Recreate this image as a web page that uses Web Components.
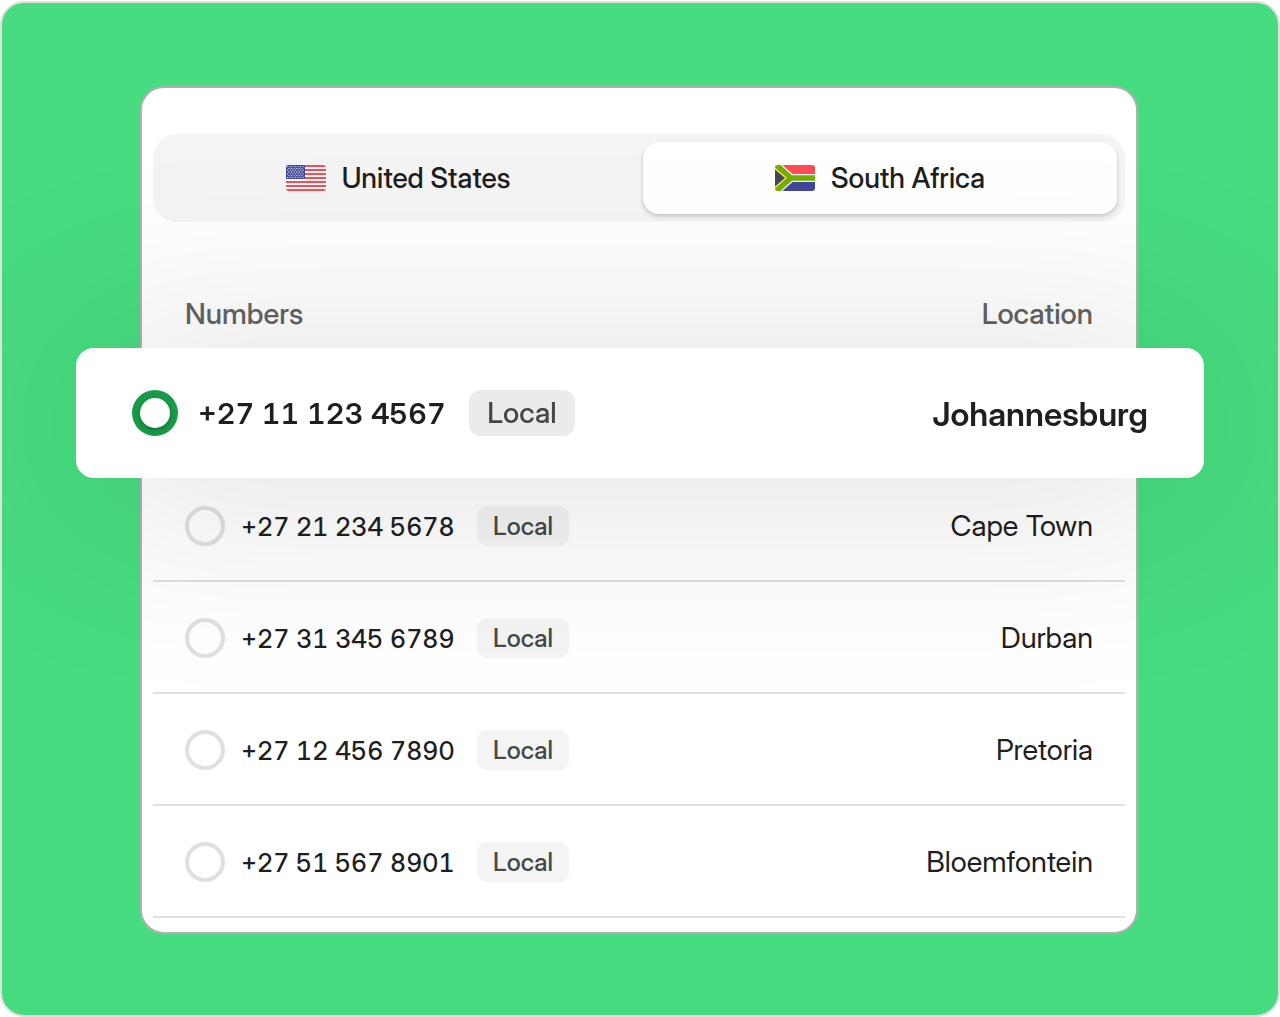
<!DOCTYPE html>
<html lang="en">
<head>
<meta charset="utf-8">
<meta name="viewport" content="width=device-width, initial-scale=1">
<title>Choose a number</title>
<style>
  body {
    margin: 0;
    background: #fff;
    color: #1f1f1f;
    font-family: "Inter Display", Inter, "Liberation Sans", sans-serif;
  }
</style>
</head>
<body>
<number-stage>
  <number-panel>
    <country-tabs slot="tabs">
      <country-tab country="us">United States</country-tab>
      <country-tab country="za" selected>South Africa</country-tab>
    </country-tabs>
    <number-list>
      <number-row number="+27 11 123 4567" kind="Local" selected>Johannesburg</number-row>
      <number-row number="+27 21 234 5678" kind="Local">Cape Town</number-row>
      <number-row number="+27 31 345 6789" kind="Local">Durban</number-row>
      <number-row number="+27 12 456 7890" kind="Local">Pretoria</number-row>
      <number-row number="+27 51 567 8901" kind="Local">Bloemfontein</number-row>
    </number-list>
  </number-panel>
</number-stage>

<script>
  const build = (host, html) => {
    const root = host.attachShadow({ mode: "open" });
    const template = document.createElement("template");
    template.innerHTML = html;
    root.append(template.content.cloneNode(true));
    return root;
  };

  const starRows = () => {
    let dots = "";
    for (let row = 0; row < 7; row++) {
      const count = row % 2 ? 6 : 7;
      for (let i = 0; i < count; i++) {
        const x = 1.6 + i * 2.6 + (row % 2 ? 1.3 : 0);
        dots += `<circle cx="${x}" cy="${1.6 + row * 1.8}" r=".65"/>`;
      }
    }
    return dots;
  };

  const flags = {
    us: `<rect width="40" height="26" fill="#fff"/>
      <path d="M0 1H40M0 5H40M0 9H40M0 13H40M0 17H40M0 21H40M0 25H40" stroke="#ff4b55" stroke-width="2"/>
      <rect width="19" height="14" fill="#41479b"/>
      <g fill="#e4e6f5">${starRows()}</g>`,
    za: `<rect width="40" height="13" fill="#ff4b55"/>
      <rect y="13" width="40" height="13" fill="#41479b"/>
      <path d="M-2 -3L16 13L-2 29M16 13H40" fill="none" stroke="#f5f5f5" stroke-width="8"/>
      <path d="M0 2L13 13L0 24Z" fill="#ffe15a"/>
      <path d="M0 4.5L10 13L0 21.5Z" fill="#464655"/>
      <path d="M-2 -3L16 13L-2 29M16 13H40" fill="none" stroke="#73af00" stroke-width="5.4"/>`
  };

  customElements.define("number-stage", class extends HTMLElement {
    connectedCallback() {
      build(this, `
        <style>
          :host { display: block; box-sizing: border-box; min-height: 100vh; padding-top: 1px; }
          main {
            box-sizing: border-box;
            display: flex;
            min-height: calc(100vh - 1px);
            align-items: flex-start;
            padding: 83px 140px 81px 138px;
            border: 2px solid #e0e0e0;
            border-radius: 24px;
            background: #47dc7f;
            overflow: hidden;
          }
          ::slotted(*) { flex: 1; }
        </style>
        <main><slot></slot></main>`);
    }
  });

  customElements.define("number-panel", class extends HTMLElement {
    connectedCallback() {
      build(this, `
        <style>
          :host {
            display: flex;
            flex-direction: column;
            gap: 58px;
            padding: 46px 11px 14px;
            border: 2px solid #b0b0b0;
            border-radius: 24px;
            background: #fff;
          }
        </style>
        <slot name="tabs"></slot>
        <slot></slot>`);
    }
  });

  customElements.define("country-tabs", class extends HTMLElement {
    connectedCallback() {
      build(this, `
        <style>
          :host {
            display: flex;
            gap: 8px;
            padding: 8px;
            border-radius: 24px;
            background: #f4f4f4;
          }
          ::slotted(*) { flex: 1; }
        </style>
        <slot></slot>`);
      this.addEventListener("click", (event) => {
        const tab = event.target.closest("country-tab");
        if (!tab) return;
        for (const item of this.children) item.toggleAttribute("selected", item === tab);
      });
    }
  });

  customElements.define("country-tab", class extends HTMLElement {
    connectedCallback() {
      build(this, `
        <style>
          :host { display: flex; }
          button {
            display: flex;
            flex: 1;
            align-items: center;
            justify-content: center;
            gap: 16px;
            height: 72px;
            padding: 0 16px;
            border: 0;
            border-radius: 16px;
            background: none;
            color: inherit;
            font-family: inherit;
            font-size: 28px;
            font-weight: 500;
            line-height: 34px;
            cursor: pointer;
          }
          :host([selected]) button { background: #fff; box-shadow: 0 2px 4px rgba(0, 0, 0, .2); }
          svg { width: 40px; height: 26px; border-radius: 3px; }
        </style>
        <button type="button">
          <svg viewBox="0 0 40 26" aria-hidden="true">${flags[this.getAttribute("country")]}</svg>
          <span><slot></slot></span>
        </button>`);
    }
  });

  customElements.define("number-list", class extends HTMLElement {
    connectedCallback() {
      build(this, `
        <style>
          :host { display: block; }
          header {
            display: flex;
            align-items: center;
            justify-content: space-between;
            height: 68px;
            padding: 0 32px;
            color: #636363;
            font-size: 29px;
            font-weight: 500;
            line-height: 34px;
          }
        </style>
        <header><span>Numbers</span><span>Location</span></header>
        <div role="radiogroup" aria-label="Numbers"><slot></slot></div>`);
      this.addEventListener("pick", (event) => {
        for (const row of this.children) row.toggleAttribute("selected", row === event.target);
      });
    }
  });

  customElements.define("number-row", class extends HTMLElement {
    static observedAttributes = ["selected"];

    connectedCallback() {
      const root = build(this, `
        <style>
          :host {
            display: flex;
            align-items: center;
            justify-content: space-between;
            height: 112px;
            padding: 0 32px;
            box-shadow: inset 0 -2px #e0e0e0;
            font-size: 29px;
            line-height: 34px;
          }
          .pick { display: flex; align-items: center; gap: 16px; }
          label { display: flex; align-items: center; gap: 16px; cursor: pointer; }
          input {
            appearance: none;
            box-sizing: border-box;
            display: grid;
            place-items: center;
            width: 40px;
            height: 40px;
            margin: 0;
            border: 4px solid #e0e0e0;
            border-radius: 50%;
          }
          .number {
            min-width: 220px;
            padding-top: 2px;
            font-size: 25px;
            font-weight: 500;
            font-variant-numeric: tabular-nums;
            white-space: nowrap;
          }
          .kind {
            box-sizing: border-box;
            min-width: 92px;
            padding: 4px 12px;
            border-radius: 10px;
            background: #f4f4f4;
            color: #474747;
            font-size: 25px;
            font-weight: 500;
            line-height: 32px;
            text-align: center;
          }
          :host([selected]) {
            position: relative;
            z-index: 1;
            height: 130px;
            margin: 0 -79px -8px -77px;
            padding: 0 56px;
            border-radius: 18px;
            background: #fff;
            box-shadow: none;
            filter: drop-shadow(0 10px 100px rgba(0, 0, 0, .15));
            font-size: 33px;
            font-weight: 600;
            line-height: 40px;
          }
          :host([selected]) .pick, :host([selected]) label { gap: 20px; }
          :host([selected]) input { width: 46px; height: 46px; border: 0; background: #189a48; }
          :host([selected]) input::before {
            content: "";
            width: 30px;
            height: 30px;
            border-radius: 50%;
            background: #fff;
            box-shadow: 0 2px 4px rgba(0, 0, 0, .25);
          }
          :host([selected]) .number { min-width: 251px; font-size: 29px; font-weight: 600; }
          :host([selected]) .place { padding-top: 2px; }
          :host([selected]) .kind {
            min-width: 106px;
            border-radius: 12px;
            background: #ebebeb;
            font-size: 29px;
            line-height: 38px;
          }
        </style>
        <div class="pick">
          <label>
            <input type="radio">
            <span class="number">${this.getAttribute("number")}</span>
          </label>
          <span class="kind">${this.getAttribute("kind")}</span>
        </div>
        <span class="place"><slot></slot></span>`);
      this.input = root.querySelector("input");
      this.input.checked = this.hasAttribute("selected");
      this.input.addEventListener("change", () => {
        this.dispatchEvent(new Event("pick", { bubbles: true }));
      });
    }

    attributeChangedCallback() {
      if (this.input) this.input.checked = this.hasAttribute("selected");
    }
  });
</script>
</body>
</html>
